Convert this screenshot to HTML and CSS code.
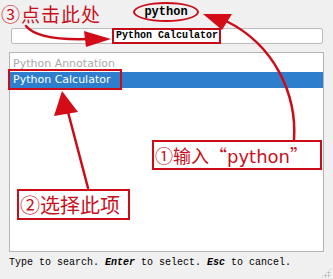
FILE: index.html
```html
<!DOCTYPE html>
<html>
<head>
<meta charset="utf-8">
<link rel="stylesheet" href="styles.css">
</head>
<body>
<div class="app">
  <div class="field"></div>
  <div class="list">
    <div class="item dim">Python Annotation</div>
    <div class="item sel">Python Calculator</div>
  </div>
  <div class="footer">Type to search. <b>Enter</b> to select. <b>Esc</b> to cancel.</div>
</div>
<div class="grip"></div>
<div class="note n3">③点击此处</div>
<div class="note oval">python</div>
<div class="note fieldbox">Python Calculator</div>
<div class="note selbox"></div>
<div class="note n1">①输入“<span class="py">python</span>”</div>
<div class="note n2">②选择此项</div>
<svg class="arrows" width="333" height="279" viewBox="0 0 333 279">
  <g fill="none" stroke="#cc0c18" stroke-width="2.5" stroke-linecap="round">
    <path d="M26 26 C 34 36, 55 40, 88 39"/>
    <path d="M294 140 C 297 95, 275 45, 226 21"/>
    <path d="M88 188 L 68 112"/>
  </g>
  <g fill="#d40c18">
    <path d="M111 39 L 84 31 L 86 47 Z"/>
    <path d="M203 14 L 232 14 L 222 30 Z"/>
    <path d="M62 91 L 54 116 L 78 112 Z"/>
  </g>
</svg>
</body>
</html>
```
FILE: styles.css
```css
html, body {
  margin: 0;
  padding: 0;
}
body {
  width: 333px;
  height: 279px;
  overflow: hidden;
  background: #f0f0f0;
  position: relative;
  font-family: "DejaVu Sans", sans-serif;
}
.app {
  padding: 28px 9px 0 9px;
}
.field {
  box-sizing: border-box;
  height: 16px;
  margin: 0 1px 0 2px;
  background: #fff;
  border: 1px solid #bcbcbc;
  border-radius: 2px;
}
.list {
  box-sizing: border-box;
  margin-top: 8px;
  height: 200px;
  background: #fff;
  border: 1px solid #b4b4b4;
  padding-top: 3px;
}
.item {
  height: 16px;
  line-height: 16px;
  font-size: 11px;
  padding-left: 3px;
  white-space: nowrap;
}
.item.dim {
  color: #a8a8a8;
}
.item.sel {
  background: #2d7fce;
  color: #fff;
}
.footer {
  margin-top: 4px;
  font-family: "Liberation Mono", monospace;
  font-size: 10px;
  line-height: 14px;
  color: #000;
  white-space: nowrap;
}
.footer b {
  font-style: italic;
}
.grip {
  position: absolute;
  right: 2px;
  bottom: 1px;
  width: 10px;
  height: 10px;
  background: radial-gradient(circle, #b0b0b0 0.8px, transparent 1.2px) 0 0 / 3px 3px;
  clip-path: polygon(100% 0, 100% 100%, 0 100%);
}
.note {
  position: absolute;
  box-sizing: border-box;
  color: #c8101c;
  white-space: nowrap;
  font-family: "Noto Sans CJK SC", sans-serif;
}
.n3 {
  left: 1px;
  top: 0;
  font-size: 19px;
  line-height: 28px;
  letter-spacing: 1px;
}
.oval {
  left: 133px;
  top: 2px;
  width: 66px;
  height: 20px;
  border: 2px solid #cc0c18;
  border-radius: 50%;
  color: #000;
  font-family: "Liberation Mono", monospace;
  font-weight: bold;
  font-size: 12px;
  line-height: 17px;
  text-align: center;
}
.fieldbox {
  left: 112px;
  top: 28px;
  width: 109px;
  height: 16px;
  border: 2px solid #c40c18;
  background: #fff;
  color: #000;
  font-family: "Liberation Mono", monospace;
  font-weight: bold;
  font-size: 10px;
  line-height: 12px;
  padding-left: 2px;
}
.selbox {
  left: 8px;
  top: 69px;
  width: 114px;
  height: 21px;
  border: 2px solid #cc0c18;
}
.n1 {
  left: 152px;
  top: 140px;
  width: 170px;
  height: 30px;
  border: 2px solid #cc0c18;
  background: #fff;
  font-size: 18px;
  line-height: 26px;
  padding-left: 1px;
}
.n1 .py {
  font-family: "DejaVu Sans", sans-serif;
  font-size: 18px;
}
.n2 {
  left: 17px;
  top: 189px;
  width: 113px;
  height: 31px;
  border: 2px solid #cc0c18;
  background: #fff;
  font-size: 20px;
  line-height: 27px;
  padding-left: 1px;
}
.arrows {
  position: absolute;
  left: 0;
  top: 0;
  pointer-events: none;
}
```
